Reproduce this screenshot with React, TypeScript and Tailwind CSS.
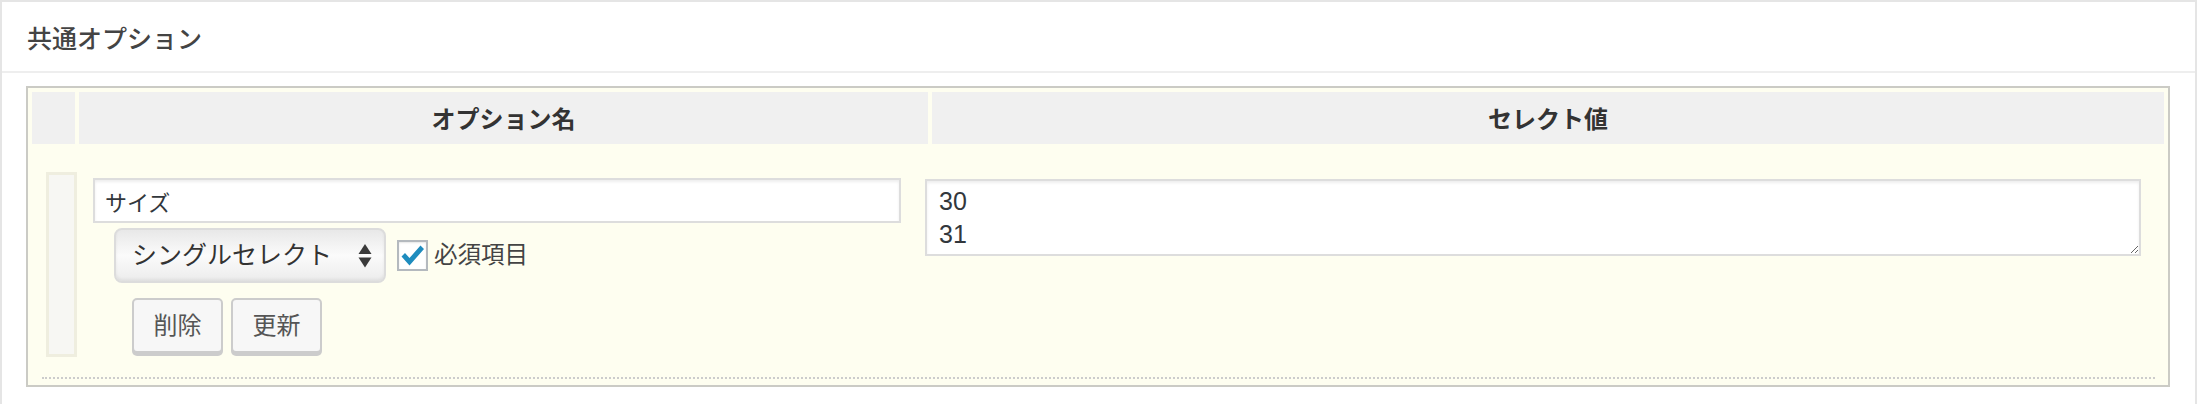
const font = "font-['Liberation_Sans','Noto_Sans_CJK_JP',sans-serif]";

function SelectBox() {
  return (
    <div className="ml-[21px] flex h-[55px] w-[272px] items-center justify-between rounded-[8px] border-2 border-[#dcdcdc] bg-gradient-to-b from-[#e8e8e8] via-[#fbfbfb] to-[#ececec] pl-[16px] pr-[12px] shadow-[inset_0_-2px_3px_rgba(0,0,0,0.06)]">
      <span className="text-[25px] leading-none text-[#333333]">シングルセレクト</span>
      <svg width="14" height="24" viewBox="0 0 14 24" className="shrink-0">
        <path d="M7 0 L13.5 10 L0.5 10 Z" fill="#3a3a3a" />
        <path d="M0.5 13.5 L13.5 13.5 L7 23.5 Z" fill="#3a3a3a" />
      </svg>
    </div>
  );
}

function CheckBox() {
  return (
    <div className="ml-[11px] flex h-[31px] w-[31px] items-center justify-center border-2 border-[#b4b9be] bg-white shadow-[inset_0_1px_2px_rgba(0,0,0,0.1)]">
      <svg width="25" height="23" viewBox="0 0 25 23">
        <path d="M1.5 12.5 L5 9 L9.5 14 L20.5 1.5 L24 5 L9.5 21.5 Z" fill="#1e8cbe" />
      </svg>
    </div>
  );
}

function Btn({ label, className = "" }: { label: string; className?: string }) {
  return (
    <div
      className={`flex h-[55px] w-[91px] items-center justify-center rounded-[5px] border-2 border-[#cccccc] bg-[#f7f7f7] text-[24px] leading-none text-[#555555] shadow-[0_3px_0_#cccccc] ${className}`}
    >
      {label}
    </div>
  );
}

export default function App() {
  return (
    <div className={`h-[404px] w-[2198px] overflow-hidden bg-white ${font}`}>
      <div className="h-[430px] w-[2197px] border-2 border-[#e5e5e5] bg-white">
        <div className="flex h-[71px] items-center border-b-2 border-[#eeeeee] pl-[25px] pt-[5px]">
          <h2 className="text-[25px] font-medium leading-none text-[#444444]">共通オプション</h2>
        </div>

        <div className="px-[24px] pt-[13px]">
          <div className="w-[2144px] border-2 border-[#cbcbc5] bg-[#fefef0] p-[4px]">
            <div className="grid h-[52px] grid-cols-[43px_849px_1232px] gap-[4px] text-[24px] font-bold leading-none text-[#333333]">
              <div className="bg-[#f0f0f0]" />
              <div className="flex items-center justify-center bg-[#f0f0f0] pt-[3px]">オプション名</div>
              <div className="flex items-center justify-center bg-[#f0f0f0] pt-[3px]">セレクト値</div>
            </div>

            <div className="flex items-start">
              <div className="ml-[14px] mt-[28px] h-[185px] w-[31px] border-[3px] border-[#efeedf] bg-[#f7f7f3]" />

              <div className="ml-[16px] mt-[34px] w-[808px]">
                <input
                  readOnly
                  defaultValue="サイズ"
                  className="block h-[45px] w-[808px] border-2 border-[#dddddd] bg-white px-[10px] text-[22px] text-[#32373c] shadow-[inset_0_2px_3px_rgba(0,0,0,0.07)] outline-none"
                />
                <div className="mt-[5px] flex items-center">
                  <SelectBox />
                  <CheckBox />
                  <span className="ml-[6px] text-[23.5px] leading-none text-[#444444]">必須項目</span>
                </div>
                <div className="mt-[15px] flex">
                  <Btn label="削除" className="ml-[39px]" />
                  <Btn label="更新" className="ml-[8px]" />
                </div>
              </div>

              <textarea
                readOnly
                defaultValue={"30\n31"}
                className="ml-[24px] mt-[35px] block h-[77px] w-[1216px] border-2 border-[#dddddd] bg-white px-[12px] pt-[4px] text-[25px] leading-[33px] text-[#32373c] shadow-[inset_0_2px_3px_rgba(0,0,0,0.07)] outline-none"
              />
            </div>

            <div className="ml-[10px] mt-[20px] w-[2113px] border-t-2 border-dotted border-[#cccccc]" />
            <div className="h-[2px]" />
          </div>
        </div>
      </div>
    </div>
  );
}
